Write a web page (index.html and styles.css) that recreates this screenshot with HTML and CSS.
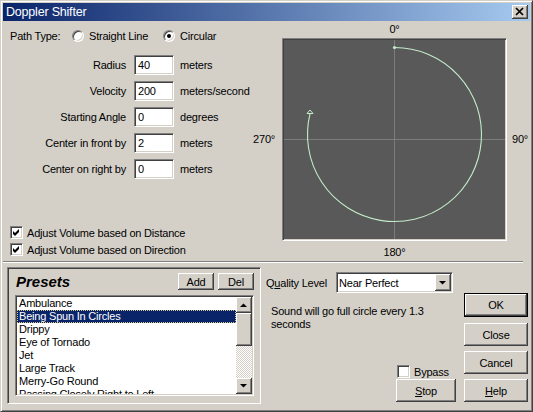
FILE: index.html
```html
<!DOCTYPE html>
<html lang="en">
<head>
    <meta charset="UTF-8">
    <title>Doppler Shifter</title>
    <link rel="stylesheet" href="styles.css">
</head>
<body>
    <div class="window">
        <div class="titlebar">
            <span class="title">Doppler Shifter</span>
            <div class="close-btn raised">
                <svg width="16" height="14" viewBox="0 0 16 14">
                    <path d="M4 3 L11 10 M11 3 L4 10" stroke="#000" stroke-width="1.7"/>
                </svg>
            </div>
        </div>

        <div class="top">
            <div class="settings">
                <div class="path-row">
                    <span class="path-label">Path Type:</span>
                    <span class="radio-opt opt-line"><span class="radio"></span>Straight Line</span>
                    <span class="radio-opt"><span class="radio checked"></span>Circular</span>
                </div>

                <div class="fields">
                    <span class="field-label">Radius</span>
                    <div class="textbox">40</div>
                    <span class="unit">meters</span>

                    <span class="field-label">Velocity</span>
                    <div class="textbox">200</div>
                    <span class="unit">meters/second</span>

                    <span class="field-label">Starting Angle</span>
                    <div class="textbox">0</div>
                    <span class="unit">degrees</span>

                    <span class="field-label">Center in front by</span>
                    <div class="textbox">2</div>
                    <span class="unit">meters</span>

                    <span class="field-label">Center on right by</span>
                    <div class="textbox">0</div>
                    <span class="unit">meters</span>
                </div>

                <div class="checks">
                    <div class="check-row">
                        <span class="checkbox">
                            <svg width="9" height="9" viewBox="0 0 9 9"><path d="M1 3 L3 5 L7 1 L7 4 L3 8 L1 6 Z" fill="#000"/></svg>
                        </span>
                        Adjust Volume based on Distance
                    </div>
                    <div class="check-row">
                        <span class="checkbox">
                            <svg width="9" height="9" viewBox="0 0 9 9"><path d="M1 3 L3 5 L7 1 L7 4 L3 8 L1 6 Z" fill="#000"/></svg>
                        </span>
                        Adjust Volume based on Direction
                    </div>
                </div>
            </div>

            <div class="plot-area">
                <span></span>
                <span class="deg deg-top">0°</span>
                <span></span>

                <span class="deg deg-left">270°</span>
                <div class="plot">
                    <svg width="221" height="199" viewBox="0 0 221 199">
                        <line x1="110.5" y1="0" x2="110.5" y2="199" stroke="#7c7c7c"/>
                        <line x1="0" y1="99.5" x2="221" y2="99.5" stroke="#7c7c7c"/>
                        <path d="M110.5 7.5 A87 87 0 1 1 26.1 73.4" fill="none" stroke="#c4ecca" stroke-width="1.1"/>
                        <polygon points="26,70 23,73.5 29,73.5" fill="none" stroke="#c4ecca"/>
                        <circle cx="110.5" cy="7.5" r="1.6" fill="#c4ecca"/>
                    </svg>
                </div>
                <span class="deg deg-right">90°</span>

                <span></span>
                <span class="deg deg-bottom">180°</span>
                <span></span>
            </div>
        </div>

        <div class="separator"></div>

        <div class="bottom">
            <div class="presets">
                <div class="presets-head">
                    <span class="presets-title">Presets</span>
                    <div class="btn small-btn">Add</div>
                    <div class="btn small-btn">Del</div>
                </div>
                <div class="listbox">
                    <div class="list-items">
                        <div class="list-item">Ambulance</div>
                        <div class="list-item selected">Being Spun In Circles</div>
                        <div class="list-item">Drippy</div>
                        <div class="list-item">Eye of Tornado</div>
                        <div class="list-item">Jet</div>
                        <div class="list-item">Large Track</div>
                        <div class="list-item">Merry-Go Round</div>
                        <div class="list-item">Passing Closely Right to Left</div>
                    </div>
                    <div class="scrollbar">
                        <div class="sb-btn raised">
                            <svg width="16" height="16" viewBox="0 0 16 16"><polygon points="4,10 11,10 7.5,6.5" fill="#000"/></svg>
                        </div>
                        <div class="sb-thumb raised"></div>
                        <div class="sb-track"></div>
                        <div class="sb-btn raised">
                            <svg width="16" height="16" viewBox="0 0 16 16"><polygon points="4,6 11,6 7.5,9.5" fill="#000"/></svg>
                        </div>
                    </div>
                </div>
            </div>

            <div class="controls">
                <div class="quality-row">
                    <span class="quality-label">Q<u>u</u>ality Level</span>
                    <div class="select">
                        <span class="select-value">Near Perfect</span>
                        <div class="select-btn raised">
                            <svg width="16" height="17" viewBox="0 0 16 17"><polygon points="4,7 11,7 7.5,10.5" fill="#000"/></svg>
                        </div>
                    </div>
                </div>

                <div class="lower">
                    <div class="info-col">
                        <div class="info-text">Sound will go full circle every 1.3 seconds</div>
                        <div class="stop-group">
                            <div class="check-row bypass-row">
                                <span class="checkbox"></span>
                                Bypass
                            </div>
                            <div class="btn stop-btn"><u>S</u>top</div>
                        </div>
                    </div>
                    <div class="buttons">
                        <div class="btn default-btn">OK</div>
                        <div class="btn">Close</div>
                        <div class="btn">Cancel</div>
                        <div class="btn"><u>H</u>elp</div>
                    </div>
                </div>
            </div>
        </div>
    </div>
</body>
</html>
```

FILE: styles.css
```css
body {
    margin: 0;
    padding: 0;
    background-color: #d4d0c8;
}
.window {
    width: 533px;
    height: 412px;
    box-sizing: border-box;
    border: 1px solid;
    border-color: #d4d0c8 #404040 #404040 #d4d0c8;
    box-shadow: inset 1px 1px #fff, inset -1px -1px #808080;
    padding: 2px;
    background-color: #d4d0c8;
    font-family: "Liberation Sans", Arial, sans-serif;
    font-size: 11px;
    letter-spacing: -0.2px;
    color: #000;
    overflow: hidden;
}
.raised {
    background-color: #d4d0c8;
    box-shadow: inset -1px -1px #404040, inset 1px 1px #fff, inset -2px -2px #808080;
}

/* title bar */
.titlebar {
    height: 18px;
    display: flex;
    align-items: center;
    justify-content: space-between;
    padding: 0 2px 0 3px;
    background: linear-gradient(to right, #0a246a, #a6caf0);
}
.title {
    color: #fff;
    font-size: 12.5px;
}
.close-btn {
    width: 16px;
    height: 14px;
}
.close-btn svg {
    display: block;
}

/* top part */
.top {
    display: flex;
    height: 238px;
}
.settings {
    width: 250px;
    box-sizing: border-box;
    padding-left: 7px;
}
.path-row {
    display: flex;
    align-items: center;
    height: 14px;
    margin-top: 8px;
}
.path-label {
    width: 62px;
}
.radio-opt {
    display: flex;
    align-items: center;
    gap: 5px;
}
.opt-line {
    width: 91px;
}
.radio {
    width: 12px;
    height: 12px;
    box-sizing: border-box;
    border-radius: 50%;
    border: 1px solid;
    border-color: #808080 #fff #fff #808080;
    box-shadow: inset 1px 1px #404040, inset -1px -1px #d4d0c8;
    background-color: #fff;
    position: relative;
}
.radio.checked::after {
    content: "";
    position: absolute;
    left: 3px;
    top: 3px;
    width: 4px;
    height: 4px;
    border-radius: 50%;
    background-color: #000;
}
.fields {
    display: grid;
    grid-template-columns: 118px 40px auto;
    grid-auto-rows: 20px;
    column-gap: 6px;
    row-gap: 6px;
    align-items: center;
    margin-top: 12px;
}
.field-label {
    text-align: right;
    padding-right: 2px;
}
.textbox {
    height: 20px;
    box-sizing: border-box;
    border: 1px solid;
    border-color: #808080 #fff #fff #808080;
    box-shadow: inset 1px 1px #404040, inset -1px -1px #d4d0c8;
    background-color: #fff;
    padding-left: 3px;
    line-height: 18px;
}
.checks {
    display: flex;
    flex-direction: column;
    gap: 4px;
    margin-top: 47px;
}
.check-row {
    display: flex;
    align-items: center;
    gap: 4px;
    height: 13px;
}
.checkbox {
    width: 13px;
    height: 13px;
    box-sizing: border-box;
    border: 1px solid;
    border-color: #808080 #fff #fff #808080;
    box-shadow: inset 1px 1px #404040, inset -1px -1px #d4d0c8;
    background-color: #fff;
    display: flex;
    align-items: center;
    justify-content: center;
}
.checkbox svg {
    display: block;
}

/* polar plot */
.plot-area {
    display: grid;
    grid-template-columns: 29px 225px 1fr;
    grid-template-rows: 17px 203px 1fr;
}
.deg {
    line-height: 13px;
}
.deg-top {
    text-align: center;
    align-self: center;
}
.deg-bottom {
    text-align: center;
    margin-top: 5px;
}
.deg-left {
    text-align: right;
    padding-right: 7px;
    align-self: center;
}
.deg-right {
    padding-left: 5px;
    align-self: center;
}
.plot {
    box-sizing: border-box;
    border: 1px solid;
    border-color: #808080 #fff #fff #808080;
    box-shadow: inset 1px 1px #404040, inset -1px -1px #d4d0c8;
    padding: 1px;
    background-color: #595959;
}
.plot svg {
    display: block;
}

.separator {
    border-top: 1px solid #808080;
    border-bottom: 1px solid #fff;
    margin: 2px 7px 0 0;
}

/* bottom part */
.bottom {
    display: flex;
}
.presets {
    width: 254px;
    height: 137px;
    box-sizing: border-box;
    margin: 4px 0 0 4px;
    border: 1px solid;
    border-color: #808080 #fff #fff #808080;
    box-shadow: inset 1px 1px #404040, inset -1px -1px #d4d0c8;
    padding: 5px 6px 0 7px;
}
.presets-head {
    display: flex;
    align-items: center;
    height: 17px;
}
.presets-title {
    flex: 1;
    padding-left: 1px;
    font-size: 15px;
    font-weight: bold;
    font-style: italic;
    letter-spacing: 0;
}
.btn {
    background-color: #d4d0c8;
    box-shadow: inset -1px -1px #404040, inset 1px 1px #fff, inset -2px -2px #808080;
    display: flex;
    align-items: center;
    justify-content: center;
    box-sizing: border-box;
    height: 23px;
}
.small-btn {
    width: 36px;
    height: 17px;
    margin-left: 4px;
}
.listbox {
    display: flex;
    height: 101px;
    margin-top: 5px;
    box-sizing: border-box;
    border: 1px solid;
    border-color: #808080 #fff #fff #808080;
    box-shadow: inset 1px 1px #404040, inset -1px -1px #d4d0c8;
    padding: 1px;
    background-color: #fff;
}
.list-items {
    flex: 1;
    overflow: hidden;
}
.list-item {
    height: 13px;
    line-height: 13px;
    padding-left: 2px;
    white-space: nowrap;
}
.list-item.selected {
    background-color: #0a246a;
    color: #fff;
    outline: 1px dotted #d8c890;
    outline-offset: -1px;
}
.scrollbar {
    width: 16px;
    display: flex;
    flex-direction: column;
}
.sb-btn {
    height: 16px;
}
.sb-btn svg {
    display: block;
}
.sb-thumb {
    height: 33px;
}
.sb-track {
    flex: 1;
    background-image: repeating-conic-gradient(#fff 0 25%, #d4d0c8 0 50%);
    background-size: 2px 2px;
}

.controls {
    margin-left: 5px;
    padding-top: 9px;
}
.quality-row {
    display: flex;
    align-items: center;
    height: 21px;
}
.quality-label {
    width: 70px;
}
.select {
    width: 117px;
    height: 21px;
    box-sizing: border-box;
    border: 1px solid;
    border-color: #808080 #fff #fff #808080;
    box-shadow: inset 1px 1px #404040, inset -1px -1px #d4d0c8;
    background-color: #fff;
    display: flex;
    align-items: center;
    padding: 0 1px 0 2px;
}
.select-value {
    flex: 1;
}
.select-btn {
    width: 16px;
    height: 17px;
}
.select-btn svg {
    display: block;
}
.lower {
    display: flex;
    height: 109px;
}
.info-col {
    width: 190px;
    display: flex;
    flex-direction: column;
}
.info-text {
    margin-top: 12px;
    padding-left: 5px;
    width: 175px;
    line-height: 13px;
}
.stop-group {
    margin-top: auto;
    align-self: flex-end;
    width: 60px;
}
.bypass-row {
    margin-left: 1px;
}
.stop-btn {
    margin-top: 1px;
    width: 60px;
}
.buttons {
    margin-left: 8px;
    width: 64px;
    display: flex;
    flex-direction: column;
    gap: 5px;
}
.default-btn {
    height: 24px;
    border: 1px solid #000;
    margin-bottom: 1px;
}
```
